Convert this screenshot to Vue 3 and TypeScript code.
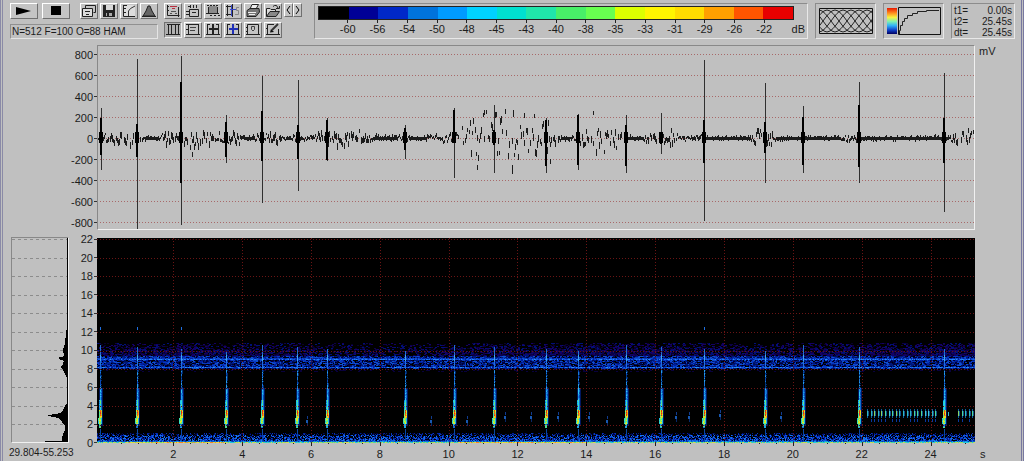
<script setup lang="ts">
interface Shape { d: string; fill?: string; stroke?: string; width?: number }
interface Tool { name: string; shapes: Shape[]; pressed?: boolean }
interface Layer { color: string; d: string }

function makeRandom(seed: number): () => number {
  let s = seed
  return () => {
    s = (s * 1664525 + 1013904223) % 4294967296
    return s / 4294967296
  }
}

const ink = '#222'

const fileTools: Tool[] = [
  { name: 'Copy window', shapes: [
    { d: 'M3.5 4V1.5H13.5V8.5H11.5', stroke: ink },
    { d: 'M.5 4.5H10.5V12.5H.5Z', stroke: ink, fill: '#ddd' },
    { d: 'M3 7.5H8M4 10.5H7', stroke: ink },
  ] },
  { name: 'Save', shapes: [
    { d: 'M1 1H13V13H1Z', fill: '#222' },
    { d: 'M4 1H11V6H4Z', fill: '#d8d8d8' },
    { d: 'M4 9H10V12H4Z', fill: '#aaa' },
    { d: 'M5 9H7V12H5Z', fill: '#222' },
  ] },
  { name: 'Transfer curve', shapes: [
    { d: 'M1 1H13V13H1Z', fill: '#ddd' },
    { d: 'M1.5 1V12.5H13', stroke: ink },
    { d: 'M6.5 12V7L8.5 4.5L13 2', stroke: '#333' },
    { d: 'M2 1.5H5M2 4.5H4M2 8.5H4', stroke: ink },
  ] },
  { name: 'Window shape', shapes: [
    { d: 'M1 12L4 7L6 2H8L10 7L13 12Z', fill: '#666', stroke: ink },
    { d: 'M0 12.5H14', stroke: ink },
  ] },
]

const viewTools: Tool[] = [
  { name: 'Zoom to marker', shapes: [
    { d: 'M1.5 1V11.5H13.5M12.5 3V13M1 2.5H3M1 6.5H3', stroke: ink },
    { d: 'M4 2.5H11M6 4.5H9', stroke: '#b83040' },
    { d: 'M5 7.5H10M4 9.5H6M9 9.5H11', stroke: '#555' },
  ] },
  { name: 'Zoom 100 percent', shapes: [
    { d: 'M3.5 5.5H12.5V12.5H3.5ZM0 7.5H3M0 10.5H3', stroke: ink },
    { d: 'M4.5 1V4M7.5 1V4M10.5 1V4M2 2.5H4M6 8.5H10', stroke: ink },
  ] },
  { name: 'Select region', shapes: [
    { d: 'M3 2H11V9H3Z', fill: '#8a8a8a' },
    { d: 'M1 1.5H3M4 1.5H6M7 1.5H9M10 1.5H12M2.5 3V9M11.5 3V9M0 9.5H13M4 11.5H6M8 11.5H10M12 11.5H14', stroke: ink },
  ] },
  { name: 'Spectrogram cursor', shapes: [
    { d: 'M1.5 1V12M0 10.5H7M0 2.5H6M6.5 0V13', stroke: ink },
    { d: 'M4 5.5H10M5.5 1V12', stroke: '#3848c8' },
    { d: 'M13 3.5H10.5V6.5H12.5V10.5H9', stroke: '#888' },
  ] },
  { name: 'Print', shapes: [
    { d: 'M4 5L6 .5H12.5L10 5', fill: '#eee', stroke: ink },
    { d: 'M1 6.5L4 4.5H13L13.5 8L10 12.5H1Z', fill: '#777', stroke: ink },
    { d: 'M2 8.5H10M3 10.5H9M7 2.5H10', stroke: '#eee' },
  ] },
  { name: 'Open', shapes: [
    { d: 'M.5 12V4.5H4L5 5.5H9.5V7.5', stroke: ink, fill: '#ddd' },
    { d: 'M.5 12.5L4 7.5H13.5L10 12.5Z', fill: '#888', stroke: ink },
    { d: 'M7 2.5L8.5 1.5H10.5L12 4M13.5 2V4.5H10', stroke: ink },
  ] },
  { name: 'Vertical grid', pressed: true, shapes: [
    { d: 'M2.5 1V12M5.5 2V11M9.5 2V11M12.5 1V12M0 11.5H14M1 1.5H14', stroke: ink },
  ] },
  { name: 'Labels', shapes: [
    { d: 'M2.5 1V12M0 1.5H13M0 11.5H14M12.5 1V12M0 6.5H2', stroke: ink },
    { d: 'M4 4.5H10M4 7.5H9', stroke: '#444' },
  ] },
  { name: 'Cross cursor', shapes: [
    { d: 'M1.5 1V12M0 11.5H14M12.5 1V12M1 1.5H4M10 1.5H13', stroke: ink },
    { d: 'M7 1V11M3 6H12', stroke: ink, width: 2 },
  ] },
  { name: 'Free cursor', shapes: [
    { d: 'M1.5 1V12M0 11.5H14M12.5 1V12M1 1.5H4M10 1.5H13', stroke: ink },
    { d: 'M7 1V11M3 6H12', stroke: '#2030b8', width: 2 },
  ] },
  { name: 'Snapshot', shapes: [
    { d: 'M1.5 1.5H12.5V11.5H1.5ZM0 11.5H14M0 4.5H2M0 8.5H2', stroke: ink },
    { d: 'M5.5 3.5H8.5V6.5L7 8L5.5 6.5Z', stroke: '#444' },
  ] },
  { name: 'Annotate', shapes: [
    { d: 'M8 1.5H1.5V11.5H12.5V6M0 11.5H14M0 5.5H2', stroke: ink },
    { d: 'M6 7L12 1', stroke: '#333', width: 2 },
    { d: 'M4 9.5L5 6L8 9Z', fill: '#111' },
  ] },
]

const colors = ['#000000', '#000096', '#0028c8', '#0073dc', '#009bff', '#00d2ff', '#00e0d0', '#20e6aa',
  '#48f068', '#68ff50', '#dcff00', '#fff500', '#ffdc00', '#ffa000', '#ff5500', '#e80000']
const levels = ['-60', '-56', '-54', '-50', '-48', '-45', '-43', '-40', '-38', '-35', '-33', '-31', '-29', '-26', '-22']
const times = [['t1=', '0.00s'], ['t2=', '25.45s'], ['dt=', '25.45s']]
const voltages = [800, 600, 400, 200, 0, -200, -400, -600, -800]
const frequencies = [22, 20, 18, 16, 14, 12, 10, 8, 6, 4, 2, 0]
const seconds = [2, 4, 6, 8, 10, 12, 14, 16, 18, 20, 22, 24]

/* Crossing sine curves, one pair for each phase */
const hatch = (() => {
  let d = ''
  for (let i = -4; i < 8; i++) {
    const x = i * 8
    d += `M${x} 2C${x + 8} 2 ${x + 16} 24 ${x + 24} 24M${x} 24C${x + 8} 24 ${x + 16} 2 ${x + 24} 2`
  }
  return d
})()

/* Waveform: [x, upper thin, lower thin, upper thick, lower thick], relative to the zero line */
const pulses = [
  [4, 30, 32, 20, 17], [40, 79, 94, 14, 19], [84, 82, 87, 56, 45], [129, 23, 25, 16, 19],
  [165, 62, 65, 27, 23], [201, 58, 53, 13, 21], [230, 20, 23, 18, 22], [308, 13, 21, 10, 12],
  [357, 30, 40, 28, 4], [397, 33, 35, 8, 7], [449, 20, 35, 18, 28], [481, 24, 32, 23, 27],
  [529, 23, 35, 13, 28], [564, 25, 16, 3, 6], [607, 78, 83, 18, 25], [668, 55, 45, 16, 15],
  [706, 32, 35, 21, 27], [762, 56, 45, 33, 29], [847, 65, 74, 20, 25],
]
const envelope = [
  [0, 3], [14, 6], [28, 10], [39, 7], [45, 5], [50, 1], [60, 2], [69, 7], [84, 6], [93, 14], [105, 9],
  [118, 5], [129, 4], [138, 8], [148, 2], [168, 4], [178, 9], [188, 3], [215, 3], [223, 6], [235, 6],
  [250, 9], [265, 8], [275, 3], [298, 2], [307, 5], [315, 1], [330, 3], [353, 5], [360, 5], [370, 17],
  [388, 26], [413, 29], [433, 27], [448, 18], [455, 10], [465, 2], [480, 4], [488, 15], [510, 18], [521, 12],
  [530, 3], [545, 2], [555, 8], [573, 8], [583, 3], [605, 3], [615, 1], [652, 2], [660, 8], [672, 8],
  [680, 2], [716, 1], [740, 2], [752, 5], [766, 2], [830, 2], [850, 2], [861, 8], [878, 8],
]
function amplitude(x: number): number {
  for (let i = 1; i < envelope.length; i++) {
    const [x0, a0] = envelope[i - 1]
    const [x1, a1] = envelope[i]
    if (x <= x1) return a0 + (a1 - a0) * (x - x0) / (x1 - x0)
  }
  return 3
}
const strays = [[415, 120, 9], [387, 65, 5], [399, 67, 5], [427, 68, 5], [496, 66, 4], [380, 120, 5], [95, 107, 5], [453, 114, 5]]
const wave = (() => {
  const rnd = makeRandom(77)
  let noise = ''
  let thin = ''
  let thick = ''
  for (let x = 0; x < 878; x++) {
    const a = amplitude(x)
    if (a > 5 && rnd() < 0.25) continue
    const c = 93 + Math.round((rnd() + rnd() - 1) * a * 1.15)
    const h = a > 5 ? 4 + Math.floor(rnd() * 4) : 2 + Math.floor(rnd() * 3)
    noise += `M${x} ${c - (h >> 1)}h1v${h}h-1z`
    if (a < 3) noise += `M${x} 92h1v3h-1z`
  }
  for (const [x, y, h] of strays) noise += `M${x} ${y}h1v${h}h-1z`
  for (const [x, up, down, tu, td] of pulses) {
    thin += `M${x} ${93 - up}h1v${up + down}h-1z`
    thick += `M${x - 1} ${93 - tu}h2v${tu + td}h-2z`
    thick += `M${x - 2} 87h4v11h-4z`
  }
  return { noise, thin, thick }
})()

const calls = [3, 40, 84, 129, 165, 200, 230, 308, 357, 397, 449, 481, 529, 564, 607, 668, 706, 762, 847]
const echoes = [[210, 182], [334, 182], [370, 182], [408, 178], [434, 178], [461, 178], [492, 178], [510, 182],
  [579, 178], [592, 178], [623, 176], [684, 178]]

const layers: Layer[] = (() => {
  const rnd = makeRandom(2024)
  const result: Layer[] = []
  /* One pass is one group of paths; a later pass is drawn over the earlier ones */
  let paths: Record<string, string> = {}
  const put = (color: string, x: number, y: number, w = 1, h = 1) => {
    paths[color] = (paths[color] ?? '') + `M${x} ${y}h${w}v${h}h${-w}z`
  }
  const flush = () => {
    for (const color of Object.keys(paths)) result.push({ color, d: paths[color] })
    paths = {}
  }
  const pick = (list: string[]) => list[Math.floor(rnd() * list.length)]
  const deep = ['#00003c', '#00105a', '#001878', '#0020a0', '#0838c0']
  const mid = ['#001070', '#0020a0', '#0838c8', '#1058e0', '#1878f0']
  const bright = ['#0840d0', '#1060e8', '#2080f8', '#2890f8', '#1458d8']

  for (let x = 0; x < 878; x++) {
    const upper = 0.3 + 0.1 * Math.sin(x / 60) + (x > 440 ? 0.1 : 0)
    for (let y = 105; y < 118; y++) {
      if (rnd() < upper * (y - 99) / 12) put(pick(['#08002c', '#0c0048', '#140064', '#001078']), x, y, 2)
    }
    for (let y = 118; y < 131; y++) {
      if (y === 121) put(rnd() < 0.85 ? pick(bright) : '#0020a0', x, y)
      else if (y === 120) put(pick(['#0020a0', '#0838c0', '#1050d0']), x, y)
      else if (y === 129) put(rnd() < 0.85 ? pick(bright) : '#0020a0', x, y)
      else if (rnd() < 0.62) put(pick([...deep, '#0838c0', '#1050d0']), x, y, 2)
    }
    for (let y = 131; y < 134; y++) if (rnd() < 0.08) put('#08003c', x, y, 2)
    for (let y = 195; y < 203; y++) {
      if (rnd() < 0.4 + (y - 195) * 0.06) put(pick(y > 196 ? mid : deep), x, y)
    }
    put(pick(['#0858d0', '#10a0e8', '#0878e0', '#0838b0']), x, 203)
    const hot = (x > 360 && x < 490) || (x > 30 && x < 130)
    put(pick(hot ? ['#f0e040', '#d8e040', '#ff8020', '#80e060', '#e8d030'] : ['#50d8a0', '#a0e060', '#20c8e0', '#d0e050']), x, 204)
  }
  flush()

  calls.forEach((x, i) => {
    put('#2070d0', x, 107 + (i % 4) * 2, 1, 12)
    put('#40a8f0', x, 117, 1, 6)
    put('#2070e0', x, 123, 1, 8)
    if (i < 3 || i === 14) put('#2070e0', x, 89, 1, 3)
    put('#001860', x - 1, 150, 4, 38)
    put('#0848a8', x, 191, 1, 12)
  })
  for (const [x, y] of echoes) {
    put('#103c90', x, y - 4, 1, 3)
    put('#1858b0', x - 1, y, 2, 3)
    put('#082868', x, y + 3, 1, 3)
  }
  flush()

  for (const x of calls) {
    for (let y = 132; y < 190; y++) {
      if (y < 150) {
        put(pick(['#0848b8', '#1878d8', '#28a0e8', '#003880']), x, y)
        if (rnd() < 0.4) put('#002868', x + 1, y)
      } else if (y < 162) {
        put(pick(['#18a0f0', '#30c8f0', '#1880e0']), x, y)
        put(pick(['#0848b0', '#1070d0']), x + 1, y)
      } else if (y < 172) {
        put(pick(['#18a0e8', '#20c8e8', '#1078d8']), x - 1, y)
        put(pick(['#20d8e8', '#40e0b0', '#70e878']), x, y)
        put('#1070d0', x + 1, y)
      } else if (y < 180) {
        put(pick(['#40e0b0', '#70e878', '#c8f030']), x - 1, y)
        put(y < 178 ? pick(['#e03010', '#f06010']) : '#f0d020', x, y)
        put(pick(['#f0e020', '#90e850', '#ffa010']), x + 1, y)
      } else if (y < 186) {
        put(pick(['#20b8e0', '#40e0b0']), x - 2, y)
        put(pick(['#60e878', '#a0f040', '#e8e820']), x - 1, y)
        put(pick(['#60e878', '#a0f040', '#e8e820']), x, y)
        put('#20b8e0', x + 1, y)
      } else {
        put(pick(['#1068d0', '#20a0e0', '#50d890']), x - 1, y, 2)
      }
    }
  }
  const train = (from: number, to: number) => {
    for (let i = 0, x = from; x < to; i++, x = from + Math.round(i * 3.6)) {
      put('#0c60a0', x, 171, 1, 2)
      put(pick(['#30b8c0', '#50d898', '#40c8d8', '#88d868']), x, 173, 1, 5)
      put('#10508c', x + 1, 173, 1, 5)
      put('#0c60a0', x, 178, 1, 2)
      if (rnd() < 0.7) put('#0838a0', x, 181, 1, 3)
    }
  }
  train(770, 840)
  train(861, 877)
  put('#30b8d0', 851, 174, 1, 4)
  flush()
  return result
})()

const gridLines = (() => {
  let d = ''
  for (let i = 0; i < 11; i++) d += `M0 ${1 + Math.round(i * 18.6)}.5H878`
  for (let i = 1; i <= 12; i++) d += `M${7 + Math.round(i * 68.9)}.5 0V205`
  return d
})()
const ticks = (() => {
  let d = ''
  for (let i = 1; i <= 50; i++) {
    const x = 7 + Math.round(i * 17.225)
    d += `M${x} 0h1v${i % 4 === 0 ? 3 : 1}h-1z`
  }
  return d
})()
const spectrumGrid = frequencies.slice(0, 11).map((_, i) => `M0 ${1 + Math.round(i * 18.5)}.5H55`).join('')
const waveGrid = voltages.map((_, i) => `M0 ${9 + i * 21}.5H878`).join('')
</script>

<template>
  <main class="analyzer">
    <header class="toolbar">
      <div class="transport">
        <div class="row">
          <button class="tool wide" type="button" aria-label="Play">
            <svg viewBox="0 0 24 12" width="24" height="12"><path d="M4 2L19 6L4 10Z" fill="#000" /></svg>
          </button>
          <button class="tool wide" type="button" aria-label="Stop">
            <svg viewBox="0 0 24 12" width="24" height="12"><path d="M7 1H17V10H7Z" fill="#000" /></svg>
          </button>
          <div class="group">
            <button v-for="t in fileTools" :key="t.name" class="tool" type="button" :aria-label="t.name">
              <svg viewBox="0 0 14 14" width="14" height="14">
                <path v-for="(s, i) in t.shapes" :key="i" :d="s.d" :fill="s.fill ?? 'none'" :stroke="s.stroke" :stroke-width="s.width ?? 1" />
              </svg>
            </button>
          </div>
        </div>
        <output class="status">N=512 F=100 O=88 HAM</output>
      </div>
      <div class="views">
        <button v-for="t in viewTools" :key="t.name" class="tool" :class="{ pressed: t.pressed }" type="button" :aria-label="t.name">
          <svg viewBox="0 0 14 14" width="14" height="14">
            <path v-for="(s, i) in t.shapes" :key="i" :d="s.d" :fill="s.fill ?? 'none'" :stroke="s.stroke" :stroke-width="s.width ?? 1" />
          </svg>
        </button>
      </div>
      <div class="pager">
        <button class="tool small" type="button" aria-label="Previous">
          <svg viewBox="0 0 7 10" width="7" height="10"><path d="M5 1L2 5L5 9" fill="none" stroke="#000" /></svg>
        </button>
        <button class="tool small" type="button" aria-label="Next">
          <svg viewBox="0 0 7 10" width="7" height="10"><path d="M2 1L5 5L2 9" fill="none" stroke="#000" /></svg>
        </button>
      </div>
      <section class="panel scale">
        <div class="swatches">
          <span v-for="c in colors" :key="c" :style="{ background: c }"></span>
        </div>
        <div class="levels">
          <span class="half"></span>
          <span v-for="l in levels" :key="l" class="level">{{ l }}</span>
          <span class="half unit">dB</span>
        </div>
      </section>
      <section class="panel thumb">
        <svg viewBox="0 0 54 26" width="54" height="26">
          <path :d="hatch" fill="none" stroke="#222" />
          <path d="M.5 .5H53.5V25.5H.5Z" fill="none" stroke="#111" />
        </svg>
      </section>
      <section class="panel thumb">
        <svg viewBox="0 0 54 28" width="54" height="28">
          <defs>
            <linearGradient id="ramp" x1="0" y1="0" x2="0" y2="1">
              <stop offset="0" stop-color="#e81800" /><stop offset=".2" stop-color="#ff9020" />
              <stop offset=".36" stop-color="#f8f040" /><stop offset=".52" stop-color="#80f0b0" />
              <stop offset=".68" stop-color="#30b0f8" /><stop offset=".85" stop-color="#1040c8" />
              <stop offset="1" stop-color="#000060" />
            </linearGradient>
          </defs>
          <path d="M0 1H10V27H0Z" fill="url(#ramp)" />
          <path d="M11.5 .5H53.5V27.5H11.5Z" fill="none" stroke="#111" />
          <path d="M12.500 27V23.500H13.500V18.500H15.500V14.500H17.500V11.500H20.500V8.500H25.500V6.500H30.500V4.500H39.500V3.500H52" fill="none" stroke="#222" />
        </svg>
      </section>
      <dl class="panel times">
        <div v-for="[k, v] in times" :key="k"><dt>{{ k }}</dt><dd>{{ v }}</dd></div>
      </dl>
    </header>

    <div class="plots">
      <ol class="axis wave-axis">
        <li v-for="v in voltages" :key="v">{{ v }}</li>
      </ol>
      <svg class="wave" viewBox="0 0 876 183" preserveAspectRatio="none" shape-rendering="crispEdges" role="img" aria-label="Waveform">
        <g transform="translate(-1 -1)">
          <path :d="waveGrid" stroke="#a86a6a" stroke-dasharray="1 2" fill="none" />
          <path :d="wave.noise" fill="#1c1c1c" />
          <path :d="wave.thin" fill="#303030" />
          <path :d="wave.thick" fill="#000" />
        </g>
      </svg>
      <span class="unit-mv">mV</span>

      <svg class="spectrum" viewBox="0 0 56 204" preserveAspectRatio="none" shape-rendering="crispEdges" role="img" aria-label="Mean spectrum">
        <path :d="spectrumGrid" stroke="#8c8c8c" stroke-dasharray="3 3" fill="none" />
        <path d="M56 0H55V88L54 96L53 105L51 112L52 117L50 119H47V121L52 123L51 126L48 129L51 132L53 136L55 140V165L52 170L50 174L45 176L35 177L36 178L47 180L50 184L53 188L53 192L51 196L50 201V203H33V204H56Z" fill="#000" />
      </svg>
      <ol class="axis freq-axis">
        <li v-for="f in frequencies" :key="f">{{ f }}</li>
      </ol>
      <svg class="spectrogram" viewBox="0 0 878 205" preserveAspectRatio="none" shape-rendering="crispEdges" role="img" aria-label="Spectrogram">
        <path d="M0 0H878V205H0Z" fill="#000" />
        <path v-for="(l, i) in layers" :key="i" :d="l.d" :fill="l.color" />
        <path :d="gridLines" stroke="#6a1414" stroke-dasharray="1 2" fill="none" />
      </svg>

      <span class="range">29.804-55.253</span>
      <div class="time-axis">
        <svg class="ticks" viewBox="0 0 878 3" preserveAspectRatio="none" shape-rendering="crispEdges" aria-hidden="true"><path :d="ticks" fill="#222" /></svg>
        <ol><li v-for="s in seconds" :key="s">{{ s }}</li></ol>
      </div>
      <span class="unit-s">s</span>
    </div>
  </main>
</template>

<style>
body {
  margin: 0;
  background: #c0c0c0;
}
</style>

<style scoped>
.analyzer {
  box-sizing: border-box;
  min-height: 100vh;
  padding: 3px 6px 0 5px;
  overflow: hidden;
  background: #c0c0c0;
  border-left: 3px double #8a8aa6;
  border-right: 3px double #7878a0;
  color: #1c1c1c;
  font: 11px/12px "Liberation Sans", Arial, sans-serif;
}
ol, dl, dd {
  margin: 0;
  padding: 0;
  list-style: none;
}
svg { display: block; }
.toolbar {
  display: flex;
  align-items: flex-start;
  padding-left: 2px;
}
.transport { width: 148px; }
.row { display: flex; gap: 4px; }
.group { display: flex; gap: 2px; margin-left: 6px; }
.tool {
  box-sizing: border-box;
  display: flex;
  align-items: center;
  justify-content: center;
  width: 18px;
  height: 16px;
  padding: 0;
  background: #c4c4c4;
  border: 1px solid;
  border-color: #fff #707070 #707070 #fff;
  border-radius: 0;
}
.wide { width: 28px; }
.small { width: 9px; height: 14px; }
.pressed {
  background: #b0b0b0;
  border-color: #707070 #eee #eee #707070;
}
.status {
  box-sizing: border-box;
  display: block;
  height: 15px;
  margin-top: 5px;
  padding-left: 1px;
  border: 1px solid;
  border-color: #909090 #e4e4e4 #e4e4e4 #909090;
  font-size: 10px;
  line-height: 13px;
}
.views {
  display: grid;
  grid-template-columns: repeat(6, 18px);
  gap: 3px 2px;
  margin-left: 6px;
}
.pager { display: flex; margin-left: 2px; }
.panel {
  box-sizing: border-box;
  height: 36px;
  border: 1px solid;
  border-color: #8c8c8c #e8e8e8 #e8e8e8 #8c8c8c;
}
.scale {
  flex: 1;
  min-width: 0;
  margin-left: 12px;
  padding: 2px 13px 0 3px;
}
.swatches {
  display: flex;
  height: 12px;
  border: 1px solid #222;
}
.swatches span { flex: 1; }
.levels { display: flex; }
.half { flex: 1; }
.level {
  flex: 2;
  text-align: center;
}
.level::before {
  content: "";
  display: block;
  width: 1px;
  height: 3px;
  margin: 0 auto;
  background: #222;
}
.unit {
  display: flex;
  justify-content: flex-end;
  margin-right: -11px;
  padding: 3px 0 0 11px;
}
.thumb {
  display: flex;
  align-items: center;
  justify-content: center;
  width: 61px;
  margin-left: 7px;
}
.times {
  width: 64px;
  margin-left: 7px;
  padding: 1px 2px;
  font-size: 10px;
  line-height: 11px;
}
.times div { display: flex; justify-content: space-between; }
.plots {
  display: grid;
  grid-template-columns: 58px 28px 1fr 40px;
  grid-template-rows: 185px 206px auto;
  row-gap: 7px;
  margin-top: 6px;
  padding-left: 3px;
}
.axis {
  display: flex;
  flex-direction: column;
  text-align: right;
}
.axis li {
  flex: 1;
  display: flex;
  align-items: center;
  justify-content: flex-end;
  gap: 1px;
}
.axis li::after {
  content: "";
  width: 3px;
  height: 1px;
  background: #333;
}
.wave-axis {
  grid-column: 1 / 3;
  margin: -1px 0 -3px;
}
.wave {
  box-sizing: border-box;
  width: 100%;
  height: 185px;
  border: 1px solid;
  border-color: #888 #f0f0f0 #f0f0f0 #888;
}
.unit-mv { padding-left: 4px; }
.spectrum {
  box-sizing: border-box;
  width: 100%;
  height: 206px;
  border: 1px solid;
  border-color: #888 #f0f0f0 #f0f0f0 #888;
}
.freq-axis { margin: -7px 0 -9px; }
.spectrogram {
  width: 100%;
  height: 205px;
  margin-top: 1px;
}
.range {
  grid-column: 1 / 3;
  margin: -3px 0 0 -2px;
  font-size: 10px;
}
.time-axis { margin-top: -7px; }
.ticks { width: 100%; height: 3px; }
.time-axis ol {
  display: flex;
  padding: 2px 10px 0 42px;
}
.time-axis li { flex: 1; text-align: center; }
.unit-s {
  margin-top: -2px;
  padding-left: 5px;
}
</style>
